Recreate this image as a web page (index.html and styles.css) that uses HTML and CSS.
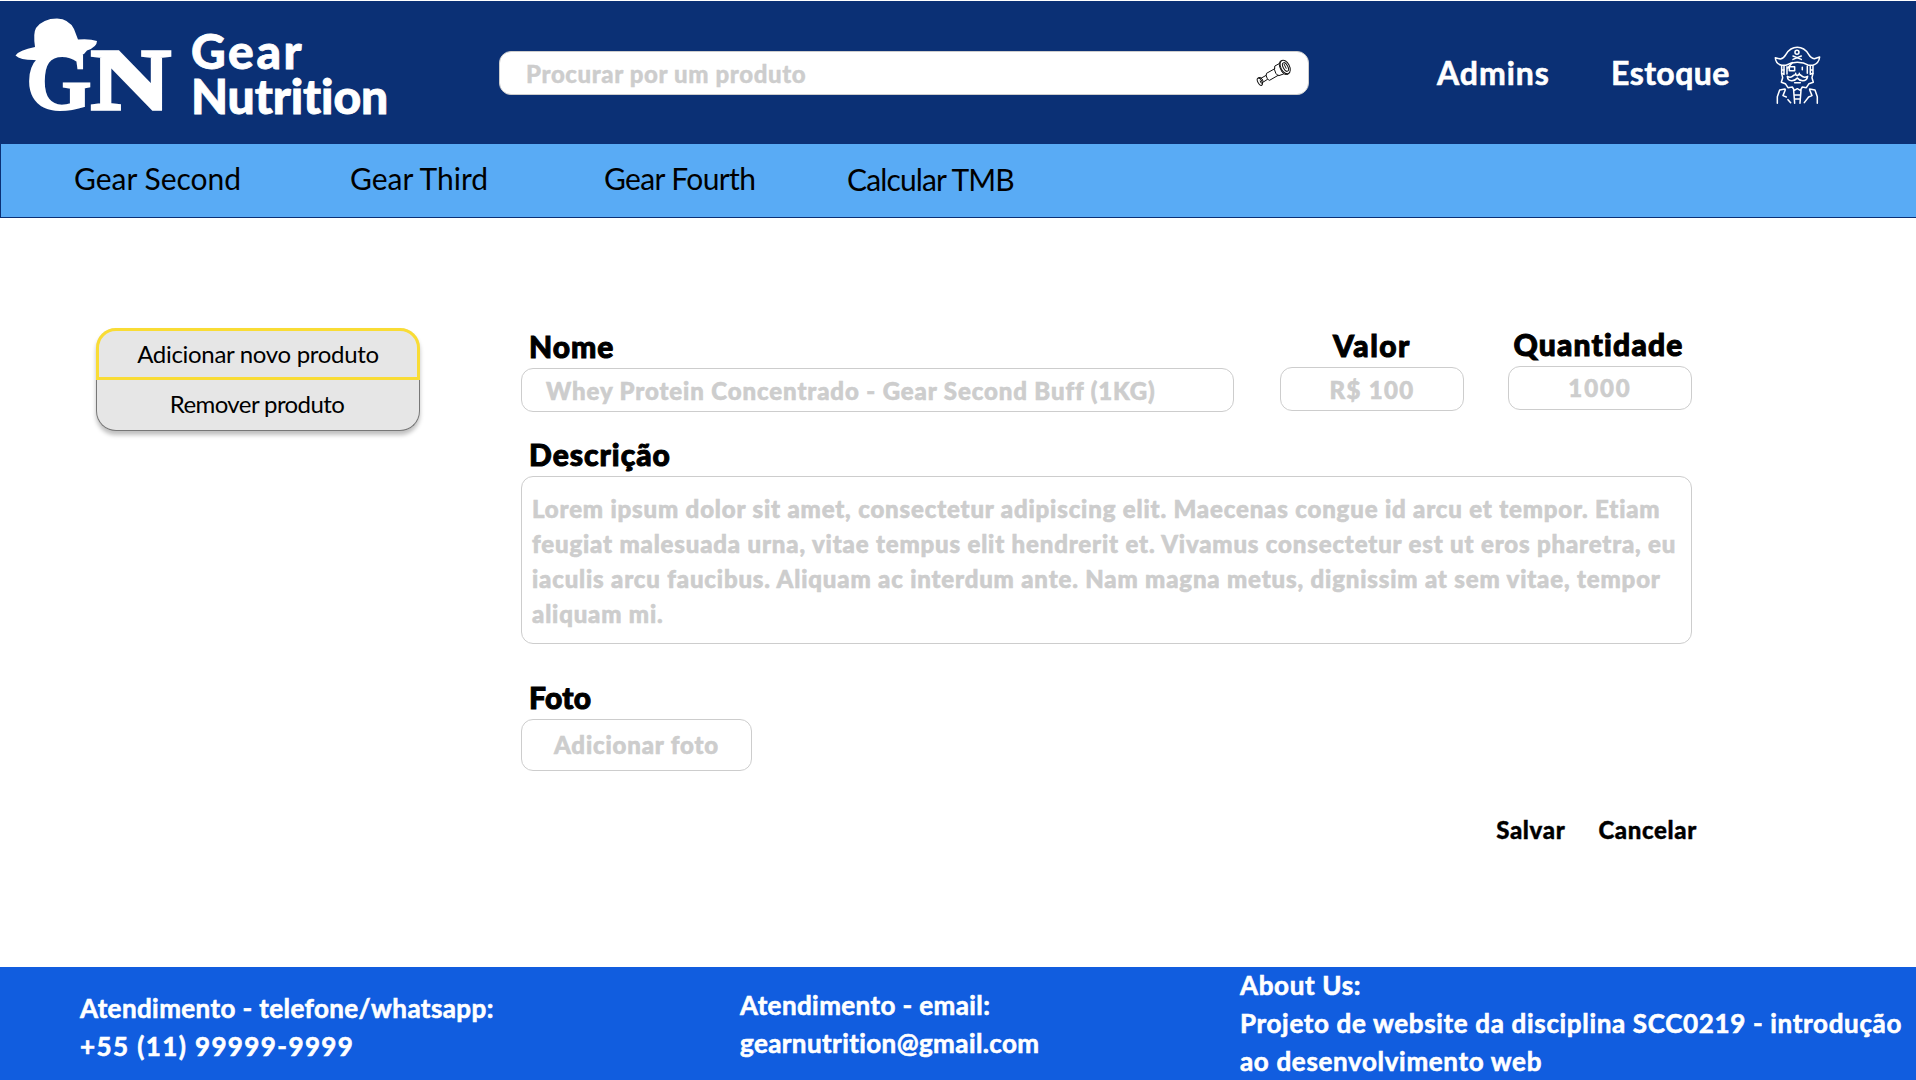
FILE: index.html
```
<!DOCTYPE html>
<html lang="pt-BR">
<head>
<meta charset="utf-8">
<title>Gear Nutrition</title>
<link rel="stylesheet" href="styles.css">
</head>
<body>
<header class="header">
  <svg class="logo" viewBox="0 1 180 143" fill="#fff">
    <path d="M15.5 55.5 Q19 50 35 47 Q33 33 36 28 Q43 18.5 57 18.5 Q69 19 74 29 L78 39.5 Q90 38.5 97 41 Q97 47 87 50.5 L84 54 L76 57 Q60 56 50 58 Q40 61 34 60 Q20 60 15.5 55.5Z"/>
    <text class="logo-letter" transform="translate(26 109) scale(.98 1)">G</text>
    <text class="logo-letter logo-n" transform="translate(91 108.5) scale(1.28 1.01)">N</text>
  </svg>
  <h1 class="brand"><span class="brand-first">Gear</span><br>Nutrition</h1>
  <div class="search">
    <span>Procurar por um produto</span>
    <svg class="spyglass" viewBox="76 85 110 84" fill="none" stroke="#111" stroke-width="3" stroke-linecap="round" stroke-linejoin="round">
      <ellipse cx="166" cy="109" rx="13" ry="22" transform="rotate(-27 166 109)"/>
      <ellipse cx="167" cy="109" rx="7" ry="14" transform="rotate(-27 167 109)"/>
      <path d="M163 101l6 12M154 90q-9 2-4 20 6 18 15 21h9M148 99l-13 7q-4 10 3 22 4 6 9 7l14-5M135 114l-25 14q-3 6 2 15 3 5 7 6l26-15M109 134l-16 9M113 146l-17 11"/>
      <ellipse cx="90" cy="153" rx="6" ry="12" transform="rotate(-27 90 153)"/>
      <path d="M91 151l3 6M85 142l6-2q7 3 9 12"/>
    </svg>
  </div>
  <nav class="links"><a class="admins">Admins</a><a class="stock">Estoque</a></nav>
  <svg class="pirate" viewBox="70 45 148 180" fill="none" stroke="#fff" stroke-width="4.6" stroke-linecap="round" stroke-linejoin="round">
    <path d="M77 83l15 4q10-2 17-14 13-21 34-21t34 21q7 12 17 13l16-5q-2 19-20 25h-12q-16-9-35-9t-35 9H96Q78 101 77 83Z"/>
    <circle cx="142" cy="67" r="6"/>
    <path d="M130 78l25 10M155 78l-25 10"/>
    <path d="M96 108v22l7 3v-25M190 108v22l-8 3v-25M96 120h8M190 120h-8M112 110v22M173 108v22"/>
    <path d="M119 110h16v12h-16zM114 114l14-16M158 112v7"/>
    <path d="M96 131l3 12-4 14 12 4 8 12 13-2 6 10 9-5 9 5 6-10 12 2 8-12 13-4-4-14 3-12"/>
    <path d="M143 137q-7-6-12 0-8 8-18 2 1 14 14 13 11-1 16-8 5 7 16 8 13 0 15-13-11 6-19-2-6-6-12 0ZM138 130v3M149 130v3M135 158h17"/>
    <path d="M83 220v-20l7-20 16-3M107 179l-7 18 10 4M115 209l8 9M203 220v-20l-7-20-16-3M180 179l7 18-10 4-13 17M132 181l3 39M154 181l-3 39M135 195h17M135 207h17"/>
  </svg>
</header>
<nav class="categories"><a>Gear Second</a><a>Gear Third</a><a class="fourth">Gear Fourth</a><a class="tmb">Calcular TMB</a></nav>
<main class="main">
  <aside class="sidebar">
    <a class="option option-active">Adicionar novo produto</a>
    <a class="option option-remove">Remover produto</a>
  </aside>
  <form class="form">
    <div class="row">
      <div class="group name"><label>Nome</label><div class="field name-field">Whey Protein Concentrado - Gear Second Buff (1KG)</div></div>
      <div class="group price"><label class="value-label">Valor</label><div class="field centered">R$ 100</div></div>
      <div class="group amount-group"><label class="amount-label">Quantidade</label><div class="field centered amount">1000</div></div>
    </div>
    <div class="group description"><label>Descrição</label>
      <div class="field textarea">Lorem ipsum dolor sit amet, consectetur adipiscing elit. Maecenas congue id arcu et tempor. Etiam<br>feugiat malesuada urna, vitae tempus elit hendrerit et. Vivamus consectetur est ut eros pharetra, eu<br>iaculis arcu faucibus. Aliquam ac interdum ante. Nam magna metus, dignissim at sem vitae, tempor<br>aliquam mi.</div>
    </div>
    <div class="group photo"><label class="photo-label">Foto</label><div class="field centered photo-field">Adicionar foto</div></div>
    <div class="actions"><a>Salvar</a><a>Cancelar</a></div>
  </form>
</main>
<footer class="footer">
  <p class="phone">Atendimento - telefone/whatsapp:<br><span class="number">+55 (11) 99999-9999</span></p>
  <p class="email">Atendimento - email:<br>gearnutrition@gmail.com</p>
  <p class="about">About Us:<br>Projeto de website da disciplina SCC0219 - introdução<br>ao desenvolvimento web</p>
</footer>
</body>
</html>
```
FILE: styles.css
```
* { box-sizing: border-box; }
body {
  margin: 0;
  height: 1080px;
  display: flex;
  flex-direction: column;
  background: #fff;
  color: #000;
  font-family: Lato, "Open Sans", sans-serif;
  white-space: nowrap;
  overflow: hidden;
}

.header {
  height: 144px;
  border-top: 1px solid #fff;
  background: #0b3075;
  display: flex;
  align-items: flex-start;
  color: #fff;
}
.logo { width: 180px; height: 143px; }
.logo-letter {
  font: 700 86px "Liberation Serif", serif;
  stroke: #fff;
  stroke-width: 2px;
}
.logo-n { stroke-width: 3.5px; }
.brand {
  margin: 27px 0 0 11px;
  width: 199px;
  font-size: 48px;
  font-weight: 900;
  line-height: 45px;
  letter-spacing: -.1px;
  -webkit-text-stroke: .8px;
}
.brand-first { letter-spacing: 2.6px; }
.search {
  margin: 50px 0 0 109px;
  width: 810px;
  height: 44px;
  padding: 0 16px 0 26px;
  border: 1px solid #cdcdcd;
  border-radius: 12px;
  background: #fff;
  color: #cdcdcd;
  display: flex;
  align-items: center;
  justify-content: space-between;
  font-size: 24px;
  font-weight: 900;
  letter-spacing: .62px;
  -webkit-text-stroke: .4px;
}
.spyglass { width: 37px; height: 28px; margin-bottom: 1px; }
.links {
  margin: 52px 0 0 128px;
  width: 336px;
  display: grid;
  grid-template-columns: 174px 1fr;
  font-size: 32px;
  font-weight: 700;
  line-height: 40px;
  -webkit-text-stroke: .6px;
}
.admins { letter-spacing: .95px; }
.stock { letter-spacing: .45px; }
.pirate { margin-top: 44px; width: 49.3px; height: 60px; }

.categories {
  height: 74px;
  padding-left: 73px;
  border: solid #0b3075;
  border-width: 0 0 1px 1px;
  background: #59abf5;
  display: grid;
  grid-template-columns: 276px 254px 243px 1fr;
  font-size: 30px;
  line-height: 69px;
}
.fourth { letter-spacing: -.64px; }
.tmb { letter-spacing: -.85px; line-height: 71px; }

.main { padding: 108px 0 0 96px; display: flex; align-items: flex-start; }
.sidebar {
  margin-top: 2px;
  width: 324px;
  border-radius: 20px;
  background: #e6e6e6;
  box-shadow: 0 4px 4px rgba(0, 0, 0, .25);
  font-size: 24px;
  text-align: center;
}
.option { display: block; }
.option-active {
  height: 52px;
  border: 3px solid #f9dc35;
  border-radius: 20px 20px 0 0;
  line-height: 46px;
  letter-spacing: -.31px;
}
.option-remove {
  height: 51px;
  padding-right: 2px;
  border: solid #777;
  border-width: 0 1px 1px;
  border-radius: 0 0 20px 20px;
  line-height: 48px;
  letter-spacing: -.59px;
}

.form { margin-left: 101px; width: 1171px; }
.row { display: grid; grid-template-columns: 759px 228px 184px; }
.group { display: flex; flex-direction: column; gap: 4px; }
.name { padding: 2px 46px 0 0; }
.price { padding: 1px 44px 0 0; }
.group label {
  padding-left: 8px;
  font-size: 30px;
  font-weight: 900;
  line-height: 36px;
  letter-spacing: 1px;
  -webkit-text-stroke: 1px;
}
.group .value-label, .group .amount-label { padding: 0 3px 0 0; text-align: center; letter-spacing: 1.2px; }
.group .value-label { padding-right: 0; letter-spacing: 1.5px; }
.group .photo-label { letter-spacing: .3px; }
.field {
  height: 44px;
  border: 1px solid #cdcdcd;
  border-radius: 12px;
  color: #cdcdcd;
  font-size: 24px;
  font-weight: 900;
  line-height: 43px;
  letter-spacing: .89px;
  -webkit-text-stroke: .6px;
}
.name-field { padding-left: 24px; }
.centered { text-align: center; letter-spacing: 1.31px; }
.amount { letter-spacing: 1.94px; line-height: 42px; }
.description { margin-top: 24px; }
.textarea { height: 168px; padding: 14px 10px; line-height: 35px; letter-spacing: .84px; }
.photo { margin-top: 35px; }
.photo-field { width: 231px; height: 52px; line-height: 49px; letter-spacing: .85px; }
.actions {
  margin: 44px -5px 0 0;
  display: flex;
  justify-content: flex-end;
  gap: 33px;
  font-size: 24px;
  font-weight: 900;
  line-height: 30px;
  letter-spacing: .65px;
  -webkit-text-stroke: .4px;
}

.footer {
  margin-top: auto;
  height: 113px;
  padding-left: 80px;
  background: #115ddf;
  color: #fff;
  display: grid;
  grid-template-columns: 660px 500px 1fr;
  align-items: start;
  font-size: 26px;
  font-weight: 700;
  line-height: 38px;
  letter-spacing: .4px;
  -webkit-text-stroke: .6px;
}
.footer p { margin: 0; }
.footer .phone { margin-top: 22px; }
.number { letter-spacing: 1.4px; }
.footer .email { margin-top: 19px; }
.footer .about { margin-top: -1px; letter-spacing: .66px; }
```
